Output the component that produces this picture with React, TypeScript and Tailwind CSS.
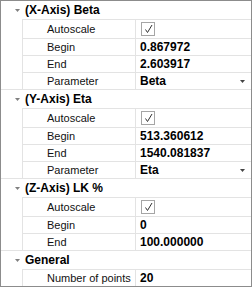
import React from 'react';

type Prop = { name: string; value?: string; check?: boolean; dropdown?: boolean };
type Group = { title: string; props: Prop[] };

const GROUPS: Group[] = [
  {
    title: '(X-Axis) Beta',
    props: [
      { name: 'Autoscale', check: true },
      { name: 'Begin', value: '0.867972' },
      { name: 'End', value: '2.603917' },
      { name: 'Parameter', value: 'Beta', dropdown: true },
    ],
  },
  {
    title: '(Y-Axis) Eta',
    props: [
      { name: 'Autoscale', check: true },
      { name: 'Begin', value: '513.360612' },
      { name: 'End', value: '1540.081837' },
      { name: 'Parameter', value: 'Eta', dropdown: true },
    ],
  },
  {
    title: '(Z-Axis) LK %',
    props: [
      { name: 'Autoscale', check: true },
      { name: 'Begin', value: '0' },
      { name: 'End', value: '100.000000' },
    ],
  },
  {
    title: 'General',
    props: [{ name: 'Number of points', value: '20' }],
  },
];

const Caret = () => (
  <svg width="5" height="3" viewBox="0 0 5 3" className="ml-[14px] mr-[5px] shrink-0">
    <polygon points="0,0 5,0 2.5,3" fill="#808080" />
  </svg>
);

const CheckBox = () => (
  <div className="ml-[1px] w-[14px] h-[14px] border border-[#a5a5a5] bg-white">
    <svg width="12" height="12" viewBox="0 0 12 12">
      <polyline points="3.5,6.5 5.5,9.5 10,2" fill="none" stroke="#333" strokeWidth="1" />
    </svg>
  </div>
);

const Row: React.FC<{ p: Prop }> = ({ p }) => (
  <div className={`flex border-t border-[#e3e3e3] ${p.check ? 'h-[19px]' : 'h-[17px]'}`}>
    <div className="w-[112px] shrink-0 pl-[24px] flex items-center overflow-hidden whitespace-nowrap text-[11px] text-[#111]">
      {p.name}
    </div>
    <div className="flex-1 border-l border-[#e3e3e3] pl-[4px] pr-[6px] flex items-center justify-between text-[12px] font-bold text-black">
      {p.check ? <CheckBox /> : <span>{p.value}</span>}
      {p.dropdown && (
        <svg width="5" height="3" viewBox="0 0 5 3">
          <polygon points="0,0 5,0 2.5,3" fill="#444" />
        </svg>
      )}
    </div>
  </div>
);

export default function App() {
  return (
    <div className="w-[252px] h-[287px] border border-[#8c8c8c] bg-white overflow-hidden font-['Liberation_Sans',Arial,sans-serif] leading-none">
      {GROUPS.map((g, i) => (
        <div key={g.title} className={i < GROUPS.length - 1 ? 'border-b border-[#e3e3e3]' : ''}>
          <div className="h-[18px] flex items-center">
            <Caret />
            <span className="text-[12px] font-bold text-black whitespace-nowrap">{g.title}</span>
          </div>
          <div className="ml-[21px] border-l border-[#e3e3e3]">
            {g.props.map((p) => (
              <Row key={p.name} p={p} />
            ))}
          </div>
        </div>
      ))}
    </div>
  );
}
